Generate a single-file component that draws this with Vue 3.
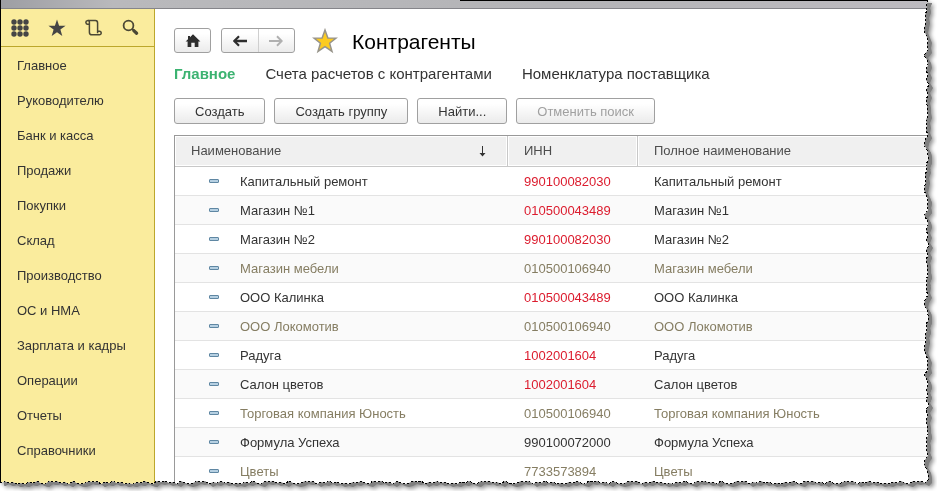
<script setup>
import { computed, onBeforeUnmount, onMounted, ref } from 'vue'

const sections = [
  'Главное', 'Руководителю', 'Банк и касса', 'Продажи', 'Покупки', 'Склад',
  'Производство', 'ОС и НМА', 'Зарплата и кадры', 'Операции', 'Отчеты', 'Справочники',
]

const rows = [
  { name: 'Капитальный ремонт', inn: '990100082030', state: 'invalid' },
  { name: 'Магазин №1', inn: '010500043489', state: 'invalid' },
  { name: 'Магазин №2', inn: '990100082030', state: 'invalid' },
  { name: 'Магазин мебели', inn: '010500106940', state: 'muted' },
  { name: 'ООО Калинка', inn: '010500043489', state: 'invalid' },
  { name: 'ООО Локомотив', inn: '010500106940', state: 'muted' },
  { name: 'Радуга', inn: '1002001604', state: 'invalid' },
  { name: 'Салон цветов', inn: '1002001604', state: 'invalid' },
  { name: 'Торговая компания Юность', inn: '010500106940', state: 'muted' },
  { name: 'Формула Успеха', inn: '990100072000', state: 'normal' },
  { name: 'Цветы', inn: '7733573894', state: 'muted' },
]

const dots = [0, 1, 2].flatMap((r) => [0, 1, 2].map((c) => ({ x: 3 + c * 6, y: 3 + r * 6 })))

/* Torn paper edge: depth of each notch, repeated along the right and bottom sides */
const rightNotches = [1, 3, 2, 4, 3, 4, 5, 3, 1, 2, 1, 5, 2, 1, 3, 1, 3, 0, 3, 1, 3, 2, 2, 1, 3, 2, 3, 1, 4, 5, 2, 1]
const bottomNotches = [1, 3, 2, 3, 0, 1, 3, 1, 2, 0, 1, 0, 2, 1, 3, 1, 2, 0, 3, 2, 3, 1, 0, 1, 3, 0, 2]

const root = ref(null)
const size = ref({ w: 0, h: 0 })
let observer

onMounted(() => {
  observer = new ResizeObserver(() => {
    size.value = { w: root.value.clientWidth, h: root.value.clientHeight }
  })
  observer.observe(root.value)
  size.value = { w: root.value.clientWidth, h: root.value.clientHeight }
})
onBeforeUnmount(() => observer.disconnect())

const tear = computed(() => {
  const right = size.value.w - 8
  const bottom = size.value.h - 7
  const points = []
  for (let y = 0, i = 0; y < bottom - 3; y += 5, i++) {
    points.push([right - rightNotches[i % rightNotches.length], y])
  }
  for (let x = right - 4, i = 0; x > 0; x -= 4, i++) {
    points.push([x, bottom - bottomNotches[i % bottomNotches.length]])
  }
  points.push([0, bottom - 2])
  return points
})
const clip = computed(() => {
  if (!size.value.w) return 'none'
  return `polygon(0 0, ${tear.value.map(([x, y]) => `${x}px ${y}px`).join(', ')})`
})
const tearLine = computed(() => tear.value.map((p) => p.join(',')).join(' '))
</script>

<template>
  <div ref="root" class="frame">
    <div class="shadow">
      <div class="window" :style="{ clipPath: clip }">
        <div class="titlebar"></div>
        <div class="body">
          <aside class="sidebar">
            <div class="tools">
              <button type="button" aria-label="Разделы">
                <svg width="18" height="18" viewBox="0 0 18 18" fill="#454545">
                  <circle v-for="(d, i) in dots" :key="i" :cx="d.x" :cy="d.y" r="2.7" />
                </svg>
              </button>
              <button type="button" aria-label="Избранное">
                <svg width="18" height="18" viewBox="0 0 18 18" fill="#454545">
                  <path d="M9 .5 11.1 6.7 17.6 6.7 12.4 10.6 14.3 17 9 13.2 3.7 17 5.6 10.6 .4 6.7 6.9 6.7Z" />
                </svg>
              </button>
              <button type="button" aria-label="История">
                <svg width="18" height="18" viewBox="0 0 18 18" fill="none" stroke="#4b4835" stroke-width="1.5">
                  <path d="M4.4 5.2V2.8A1.8 1.8 0 1 0 2.8 5.2H4.4V13.2Q4.4 15.8 7 15.8H14.5M3 1.5H10.4Q12.6 1.5 12.6 4V12.2M12.6 14.3V12.2H14.4A1.8 1.8 0 1 1 14.4 15.8" />
                </svg>
              </button>
              <button type="button" aria-label="Поиск">
                <svg width="18" height="18" viewBox="0 0 18 18" fill="none" stroke="#4b4835">
                  <circle cx="6.5" cy="6.5" r="4.9" stroke-width="1.8" />
                  <path d="M10 9.8 12 11.5" stroke-width="1.6" />
                  <path d="M11.8 11.6 14.6 14.2" stroke-width="3.3" stroke-linecap="round" />
                </svg>
              </button>
            </div>
            <nav class="sections">
              <a v-for="s in sections" :key="s" href="#">{{ s }}</a>
            </nav>
          </aside>

          <main class="content">
            <header class="heading">
              <button type="button" class="btn home" aria-label="Домой">
                <svg width="16" height="14" viewBox="0 0 16 14" fill="#2e2e2e">
                  <path d="M8 .2 15.4 7.6H13.4V13H9.7V8.8H6.3V13H2.6V7.6H.6L3 5.2V2H5V3.2Z" />
                </svg>
              </button>
              <div class="history">
                <button type="button" aria-label="Назад">
                  <svg width="14" height="12" viewBox="0 0 14 12" fill="none" stroke="#2e2e2e">
                    <path d="M1.5 6H14" stroke-width="2.4" />
                    <path d="M6 1.3 1.3 6 6 10.7" stroke-width="2.2" />
                  </svg>
                </button>
                <button type="button" aria-label="Вперед" disabled>
                  <svg width="14" height="12" viewBox="0 0 14 12" fill="none" stroke="#b0b0b0">
                    <path d="M0 6H12.5" stroke-width="2.2" />
                    <path d="M8 1.3 12.7 6 8 10.7" stroke-width="2" />
                  </svg>
                </button>
              </div>
              <svg class="star" width="26" height="26" viewBox="0 0 26 26">
                <path
                  d="M13 2 15.9 9.9 24 10.1 17.6 15.2 20 23.4 13 18.7 6 23.4 8.4 15.2 2 10.1 10.1 9.9Z"
                  fill="#fccb20" stroke="#97948b" stroke-width="1.5"
                />
              </svg>
              <h1>Контрагенты</h1>
            </header>

            <nav class="tabs">
              <a href="#" class="active">Главное</a>
              <a href="#">Счета расчетов с контрагентами</a>
              <a href="#">Номенклатура поставщика</a>
            </nav>

            <div class="commands">
              <button type="button" class="btn">Создать</button>
              <button type="button" class="btn">Создать группу</button>
              <button type="button" class="btn">Найти...</button>
              <button type="button" class="btn" disabled>Отменить поиск</button>
            </div>

            <table class="list">
              <colgroup>
                <col class="col-name" />
                <col class="col-inn" />
                <col />
              </colgroup>
              <thead>
                <tr>
                  <th>
                    <div class="sorted">
                      Наименование
                      <svg width="7" height="11" viewBox="0 0 7 11" fill="#333">
                        <path d="M3 0H4V7H6.5L3.5 10.5 .5 7H3Z" />
                      </svg>
                    </div>
                  </th>
                  <th>ИНН</th>
                  <th>Полное наименование</th>
                </tr>
              </thead>
              <tbody>
                <tr v-for="r in rows" :key="r.name" :class="r.state">
                  <td><div class="item"><i class="mark"></i>{{ r.name }}</div></td>
                  <td class="inn">{{ r.inn }}</td>
                  <td>{{ r.name }}</td>
                </tr>
              </tbody>
            </table>
          </main>
        </div>
      </div>
    </div>
    <svg class="tear" aria-hidden="true">
      <polyline :points="tearLine" />
    </svg>
  </div>
</template>

<style>
body {
  background: #fff;
}
</style>

<style scoped>
.frame {
  position: relative;
  height: 100vh;
  min-height: 300px;
  box-sizing: border-box;
  overflow: hidden;
  font: 13px/16px "Liberation Sans", Arial, sans-serif;
  color: #333;
}
.shadow {
  height: 100%;
  filter: drop-shadow(4px 3px 0 #808080) drop-shadow(2px 2px 2px #909090);
}
.window {
  display: flex;
  flex-direction: column;
  height: 100%;
  box-sizing: border-box;
  overflow: hidden;
  background: #fff;
  border-left: 1px solid #000;
}
.titlebar {
  flex: none;
  height: 9px;
  box-sizing: border-box;
  border-bottom: 1px solid #85858a;
  background:
    linear-gradient(#000, #000) right top / 51% 1px no-repeat,
    linear-gradient(90deg, #9d9ea3, #b9b9bc 12%, #b4b4b7 60%, #bdbbc0);
}
.body {
  flex: 1;
  display: flex;
  min-height: 0;
}
button {
  font: inherit;
  color: inherit;
  margin: 0;
}
a {
  color: inherit;
  text-decoration: none;
}
svg {
  display: block;
}

.sidebar {
  flex: none;
  width: 154px;
  box-sizing: border-box;
  background: #faec9d;
  border-right: 1px solid #bca72c;
}
.tools {
  display: flex;
  gap: 19px;
  height: 38px;
  padding: 0 10px;
  box-sizing: border-box;
  align-items: center;
  border-bottom: 1px solid #bca72c;
}
.tools button {
  padding: 0;
  border: 0;
  background: none;
}
.sections {
  display: flex;
  flex-direction: column;
  padding-top: 1px;
}
.sections a {
  padding-left: 16px;
  line-height: 35px;
}

.content {
  flex: 1;
  min-width: 0;
  padding: 19px 0 0 19px;
}
.heading {
  display: flex;
  align-items: center;
  height: 25px;
}
.btn,
.history {
  box-sizing: border-box;
  border: 1px solid #a0a0a0;
  border-radius: 3px;
  background: linear-gradient(#fff 20%, #ebebeb);
}
.home {
  display: flex;
  align-items: center;
  justify-content: center;
  width: 37px;
  height: 25px;
  padding: 0;
}
.history {
  display: flex;
  width: 74px;
  height: 25px;
  margin-left: 10px;
}
.history button {
  flex: 1;
  display: flex;
  align-items: center;
  justify-content: center;
  padding: 0;
  border: 0;
  background: none;
}
.history button + button {
  border-left: 1px solid #cfcfcf;
}
.star {
  margin: 0 14px 0 17px;
}
h1 {
  margin: 0;
  padding-top: 2px;
  font-size: 21px;
  line-height: 24px;
  font-weight: 400;
  color: #000;
}
.tabs {
  display: flex;
  gap: 30px;
  margin-top: 12px;
  font-size: 15px;
  line-height: 18px;
}
.tabs .active {
  font-weight: 700;
  color: #3cb371;
}
.commands {
  display: flex;
  gap: 9px;
  margin-top: 15px;
}
.commands .btn {
  height: 26px;
  padding: 1px 20px 0;
}
.commands .btn:disabled {
  color: #a0a0a0;
}

.list {
  width: 100%;
  margin-top: 11px;
  table-layout: fixed;
  border-spacing: 0;
  border-top: 1px solid #999;
  border-left: 1px solid #999;
}
.col-name {
  width: 333px;
}
.col-inn {
  width: 130px;
}
.list th {
  height: 31px;
  box-sizing: border-box;
  padding: 0 16px;
  text-align: left;
  font-weight: 400;
  color: #4d4d4d;
  background: #f0f0f0;
  border-right: 1px solid #c8c8c8;
  border-bottom: 1px solid #c8c8c8;
  box-shadow: inset 0 0 0 1px #fff;
}
.sorted {
  display: flex;
  justify-content: space-between;
  align-items: center;
  padding-right: 5px;
}
.list td {
  height: 29px;
  box-sizing: border-box;
  padding: 2px 16px 0;
  white-space: nowrap;
  border-bottom: 1px solid #e3e3e3;
}
.list tbody tr:nth-child(even) {
  background: #fafafa;
}
.item {
  display: flex;
  align-items: center;
  gap: 21px;
  padding-left: 18px;
}
.mark {
  width: 10px;
  height: 4px;
  margin-bottom: 2px;
  box-sizing: border-box;
  border: 1px solid #5f87a3;
  border-radius: 1px;
  background: #b6d0e2;
}
.muted {
  color: #857d62;
}
.invalid .inn {
  color: #dc1c2e;
}

.tear {
  position: absolute;
  inset: 0;
  width: 100%;
  height: 100%;
  pointer-events: none;
}
.tear polyline {
  fill: none;
  stroke: #000;
  stroke-width: 1;
  stroke-dasharray: 2 2;
  shape-rendering: crispEdges;
}
</style>
